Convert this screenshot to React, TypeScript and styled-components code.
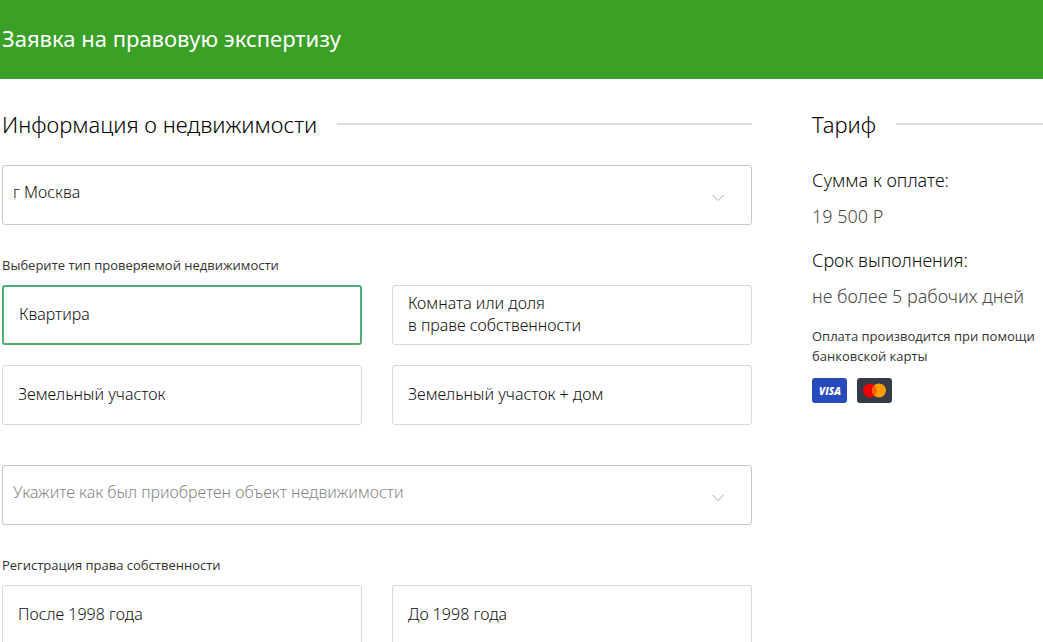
import React, { useState } from "react";
import styled, { createGlobalStyle } from "styled-components";

const GlobalStyle = createGlobalStyle`
  * { box-sizing: border-box; }
  body {
    margin: 0;
    background: #fff;
    color: #111;
    font-family: "Noto Sans", "Open Sans", sans-serif;
    font-size: 16px;
    line-height: 22px;
    font-weight: 300;
  }
  h1, h2, p, dl, dd, fieldset { margin: 0; }
`;

const Header = styled.header`
  background: #3aa026;
  padding: 23px 2px 26px;
`;

const PageTitle = styled.h1`
  color: #fff;
  font-size: 22px;
  line-height: 30px;
  font-weight: 400;
`;

const Content = styled.div`
  display: grid;
  grid-template-columns: minmax(0, 1fr) 231px;
  gap: 60px;
  padding: 30px 0 0 2px;
`;

const SectionTitle = styled.h2`
  display: flex;
  align-items: center;
  gap: 20px;
  margin-bottom: 26px;
  color: #000;
  font-size: 22px;
  line-height: 30px;
  font-weight: 300;
  white-space: nowrap;

  &::after {
    content: "";
    flex: 1;
    height: 2px;
    background: #ddd;
  }
`;

const SelectWrap = styled.div`
  display: grid;
  align-items: center;

  > * { grid-area: 1 / 1; }
`;

const Select = styled.select<{ $empty: boolean }>`
  appearance: none;
  width: 100%;
  height: 60px;
  padding: 0 60px 6px 10px;
  border: 1px solid #c8c8c8;
  border-radius: 3px;
  background: #fff;
  color: ${(p) => (p.$empty ? "#858585" : "#111")};
  font: inherit;
`;

const Chevron = styled.svg`
  justify-self: end;
  margin: 6px 28px 0 0;
  pointer-events: none;
`;

const Group = styled.fieldset`
  min-width: 0;
  padding: 30px 0 40px;
  border: 0;
`;

const GroupLabel = styled.legend`
  float: left;
  width: 100%;
  padding: 0;
  margin-bottom: 10px;
  color: #333;
  font-family: "Open Sans", "Noto Sans", sans-serif;
  font-size: 13px;
  line-height: 20px;
  font-weight: 400;
`;

const Options = styled.div`
  clear: both;
  display: grid;
  grid-template-columns: 1fr 1fr;
  gap: 20px 30px;
`;

const Option = styled.label`
  display: flex;
  align-items: center;
  min-height: 60px;
  padding: 0 15px 2px;
  border: 1px solid #d9d9d9;
  border-radius: 3px;
  white-space: pre-line;
  cursor: pointer;

  &:has(input:checked) {
    border: 2px solid #4fae72;
  }
`;

const Radio = styled.input`
  appearance: none;
  width: 0;
  height: 0;
  margin: 0;
`;

const Terms = styled.dl`
  padding-bottom: 1px;
  font-size: 18px;
  line-height: 30px;
`;

const Value = styled.dd`
  padding: 6px 0 14px;
  color: #4a4a4a;
`;

const Note = styled.p`
  color: #333;
  font-family: "Open Sans", "Noto Sans", sans-serif;
  font-size: 13px;
  line-height: 20px;
  font-weight: 400;
`;

const Cards = styled.div`
  display: flex;
  gap: 10px;
  margin-top: 12px;
`;

function SelectField({ label, placeholder, options, initial }: {
  label: string; placeholder?: string; options: string[]; initial: string;
}) {
  const [value, setValue] = useState(initial);
  return (
    <SelectWrap>
      <Select aria-label={label} $empty={!value} value={value} onChange={(e) => setValue(e.target.value)}>
        {placeholder && <option value="" hidden>{placeholder}</option>}
        {options.map((o) => <option key={o}>{o}</option>)}
      </Select>
      <Chevron width="12" height="8" viewBox="0 0 12 8" fill="none" stroke="#a8a8a8" aria-hidden="true">
        <path d="M.5 1 6 6.5 11.5 1" />
      </Chevron>
    </SelectWrap>
  );
}

function RadioGroup({ label, name, options, initial }: {
  label: string; name: string; options: string[]; initial?: string;
}) {
  const [value, setValue] = useState(initial);
  return (
    <Group>
      <GroupLabel>{label}</GroupLabel>
      <Options>
        {options.map((o) => (
          <Option key={o}>
            <Radio type="radio" name={name} value={o} checked={value === o} onChange={() => setValue(o)} />
            {o}
          </Option>
        ))}
      </Options>
    </Group>
  );
}

export default function App() {
  return (
    <>
      <GlobalStyle />
      <Header>
        <PageTitle>Заявка на правовую экспертизу</PageTitle>
      </Header>
      <Content>
        <main>
          <SectionTitle>Информация о недвижимости</SectionTitle>
          <SelectField label="Регион" options={["г Москва"]} initial="г Москва" />
          <RadioGroup
            label="Выберите тип проверяемой недвижимости"
            name="type"
            initial="Квартира"
            options={["Квартира", "Комната или доля\nв праве собственности", "Земельный участок", "Земельный участок + дом"]}
          />
          <SelectField
            label="Способ приобретения"
            placeholder="Укажите как был приобретен объект недвижимости"
            options={[]}
            initial=""
          />
          <RadioGroup
            label="Регистрация права собственности"
            name="registration"
            options={["После 1998 года", "До 1998 года"]}
          />
        </main>
        <aside>
          <SectionTitle>Тариф</SectionTitle>
          <Terms>
            <dt>Сумма к оплате:</dt>
            <Value>19 500 Р</Value>
            <dt>Срок выполнения:</dt>
            <Value>не более 5 рабочих дней</Value>
          </Terms>
          <Note>Оплата производится при помощи банковской карты</Note>
          <Cards>
            <svg width="35" height="25" viewBox="0 0 35 25" role="img" aria-label="Visa">
              <rect width="35" height="25" rx="3" fill="#254bbd" />
              <text x="18" y="17" textAnchor="middle" fill="#fff" fontFamily="Open Sans, sans-serif" fontSize="10" fontWeight="800" fontStyle="italic">VISA</text>
            </svg>
            <svg width="35" height="25" viewBox="0 0 35 25" role="img" aria-label="Mastercard">
              <rect width="35" height="25" rx="3" fill="#353a49" />
              <circle cx="13" cy="12.5" r="7" fill="#f20000" />
              <circle cx="22" cy="12.5" r="7" fill="#ff9d00" />
              <path d="M17.5 7.1a7 7 0 0 1 0 10.8 7 7 0 0 1 0-10.8Z" fill="#ff5f00" />
            </svg>
          </Cards>
        </aside>
      </Content>
    </>
  );
}
